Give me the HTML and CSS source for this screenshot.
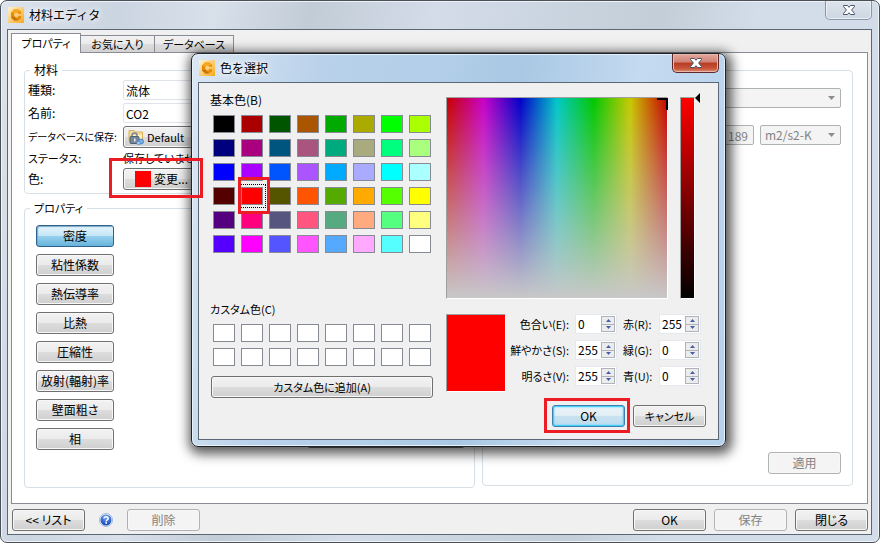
FILE: index.html
```html
<!DOCTYPE html>
<html lang="ja">
<head>
  <meta charset="UTF-8" />
  <meta name="viewport" content="width=device-width, initial-scale=1.0" />
  <title>材料エディタ</title>
  <link rel="stylesheet" href="styles.css">
</head>
<body>
<svg class="defs" width="0" height="0" aria-hidden="true">
  <defs>
    <linearGradient id="iconBg" x1="0" y1="0" x2="1" y2="1">
      <stop offset="0" stop-color="#fff3d6" />
      <stop offset="1" stop-color="#f6a81c" />
    </linearGradient>
    <radialGradient id="helpBg" cx="0.5" cy="0.25" r="0.8">
      <stop offset="0" stop-color="#6fa4f4" />
      <stop offset="1" stop-color="#0a3fb4" />
    </radialGradient>
    <symbol id="logo" viewBox="0 0 16 16">
      <rect width="16" height="16" fill="url(#iconBg)" />
      <path d="M13 4.6 L10 2.4 H6 L3 5.4 V10.4 L6.2 13.6 H10 L13 11.6 V9 H10.6 L9.4 10.6 H7.4 L6.2 9.2 V6.6 L7.4 5.4 H9.4 L10.6 6.8 H13 Z" fill="#e58a06" />
      <path d="M13 4.6 L10 2.4 H6 L3 5.4 L6.2 6.6 L7.4 5.4 H9.4 Z" fill="#f7a91a" />
      <path d="M6.2 9.2 L3 10.4 L6.2 13.6 H10 L7.4 10.6 Z" fill="#c87505" />
    </symbol>
    <symbol id="closeX" viewBox="0 0 12 10">
      <path d="M0.5 0.5 H4.5 L6 2.3 L7.5 0.5 H11.5 V1.5 L8.6 5 L11.5 8.5 V9.5 H7.5 L6 7.7 L4.5 9.5 H0.5 V8.5 L3.4 5 L0.5 1.5 Z" fill="#fff" stroke="#4a5268" stroke-width="1" stroke-linejoin="round" />
    </symbol>
  </defs>
</svg>

<div class="window main-window">
  <header class="titlebar">
    <svg class="logo"><use href="#logo" /></svg>
    <h1>材料エディタ</h1>
    <button class="close" aria-label="閉じる"><svg><use href="#closeX" /></svg></button>
  </header>

  <div class="client">
    <div class="tabs" role="tablist">
      <button class="tab active" role="tab" aria-selected="true">プロパティ</button>
      <button class="tab" role="tab">お気に入り</button>
      <button class="tab" role="tab">データベース</button>
    </div>

    <main class="page">
      <div class="column">
        <fieldset class="group">
          <legend>材料</legend>
          <div class="form">
            <label for="kind">種類:</label>
            <input id="kind" class="field" type="text" value="流体">
            <label for="name">名前:</label>
            <input id="name" class="field" type="text" value="CO2">
            <label class="long" for="saveTo">データベースに保存:</label>
            <button id="saveTo" class="btn left">
              <svg class="db-icon" viewBox="0 0 16 16">
                <path d="M1 1.5 H6 L7.5 3 H14.5 V12 H1 Z" fill="#f4dc9a" stroke="#d8b25c" />
                <path d="M5 6 H14 V12 H5 Z" fill="#fff3c4" />
                <path d="M4 8 V6.5 A2.5 2.5 0 0 1 9 6.5 V8" fill="none" stroke="#7c8794" stroke-width="1.5" />
                <rect x="2" y="7.5" width="9" height="7" rx="1" fill="#77879a" stroke="#526274" />
                <rect x="6" y="9.5" width="1.5" height="3" fill="#e8eef4" />
                <circle cx="13" cy="12.5" r="2.5" fill="#7db0e6" stroke="#4c84c4" />
                <circle cx="10.5" cy="14" r="1.8" fill="#a9cdf2" stroke="#4c84c4" stroke-width="0.7" />
              </svg>
              <span class="small">Default</span>
            </button>
            <span class="small">ステータス:</span>
            <span class="small">保存していません</span>
            <label for="change">色:</label>
            <div class="marked marked-change">
              <button id="change" class="btn left"><span class="chip"></span>変更...</button>
            </div>
          </div>
        </fieldset>

        <fieldset class="group grow">
          <legend class="small">プロパティ</legend>
          <div class="props">
            <div class="prop-list">
              <button class="btn selected">密度</button>
              <button class="btn">粘性係数</button>
              <button class="btn">熱伝導率</button>
              <button class="btn">比熱</button>
              <button class="btn">圧縮性</button>
              <button class="btn">放射(輻射)率</button>
              <button class="btn">壁面粗さ</button>
              <button class="btn">相</button>
            </div>
            <button class="btn wide" aria-label="プロパティ"></button>
          </div>
        </fieldset>
      </div>

      <fieldset class="group detail">
        <legend></legend>
        <select class="combo" disabled aria-label="種類"><option></option></select>
        <div class="value-row">
          <input class="value" type="text" value="189" disabled aria-label="値">
          <select class="combo unit" disabled aria-label="単位"><option>m2/s2-K</option></select>
        </div>
        <button class="btn std apply" disabled>適用</button>
      </fieldset>
    </main>

    <footer class="footer">
      <button class="btn std">&lt;&lt; リスト</button>
      <button class="help" aria-label="ヘルプ">
        <svg viewBox="0 0 14 14">
          <circle cx="7" cy="7" r="6.5" fill="#fff" stroke="#9db4dc" />
          <circle cx="7" cy="7" r="5.5" fill="url(#helpBg)" />
          <path d="M5 5.6 C5 3.2 9.2 3.2 9.2 5.5 C9.2 7 7.2 6.9 7.2 8.4" fill="none" stroke="#fff" stroke-width="1.5" />
          <rect x="6.4" y="9.2" width="1.6" height="1.6" fill="#fff" />
        </svg>
      </button>
      <button class="btn std" disabled>削除</button>
      <span class="spacer"></span>
      <button class="btn std">OK</button>
      <button class="btn std" disabled>保存</button>
      <button class="btn std">閉じる</button>
    </footer>
  </div>
</div>

<div class="window dialog" role="dialog" aria-labelledby="dialogTitle">
  <header class="titlebar">
    <svg class="logo"><use href="#logo" /></svg>
    <h2 id="dialogTitle">色を選択</h2>
    <button class="close red" aria-label="閉じる"><svg><use href="#closeX" /></svg></button>
  </header>

  <div class="client dialog-body">
    <section class="palette">
      <h3>基本色(B)</h3>
      <div class="swatches" id="basic"></div>
      <h3 class="custom-title small">カスタム色(C)</h3>
      <div class="swatches custom" id="custom"></div>
      <button class="btn add small">カスタム色に追加(A)</button>
    </section>

    <section class="picker">
      <div class="picker-top">
        <div class="spectrum">
          <svg class="cross" viewBox="0 0 11 12"><path d="M0 0 H11 V12 H9 V2 H0 Z" /></svg>
        </div>
        <div class="brightness">
          <svg class="arrow" viewBox="0 0 5 10"><path d="M5 0 V10 L0 5 Z" /></svg>
        </div>
      </div>

      <div class="picker-bottom">
        <div class="preview"></div>
        <div class="values small">
          <label for="hue">色合い(E):</label>
          <div class="spin"><input id="hue" type="text" value="0"><span class="steps"><button aria-label="+"></button><button aria-label="-"></button></span></div>
          <label class="rgb" for="red">赤(R):</label>
          <div class="spin"><input id="red" type="text" value="255"><span class="steps"><button aria-label="+"></button><button aria-label="-"></button></span></div>
          <label for="sat">鮮やかさ(S):</label>
          <div class="spin"><input id="sat" type="text" value="255"><span class="steps"><button aria-label="+"></button><button aria-label="-"></button></span></div>
          <label class="rgb" for="green">緑(G):</label>
          <div class="spin"><input id="green" type="text" value="0"><span class="steps"><button aria-label="+"></button><button aria-label="-"></button></span></div>
          <label for="val">明るさ(V):</label>
          <div class="spin"><input id="val" type="text" value="255"><span class="steps"><button aria-label="+"></button><button aria-label="-"></button></span></div>
          <label class="rgb" for="blue">青(U):</label>
          <div class="spin"><input id="blue" type="text" value="0"><span class="steps"><button aria-label="+"></button><button aria-label="-"></button></span></div>
        </div>
      </div>

      <div class="dialog-buttons">
        <div class="marked marked-ok"><button class="btn std default">OK</button></div>
        <button class="btn std small">キャンセル</button>
      </div>
    </section>
  </div>
</div>

<script>
  const basic = document.getElementById('basic');
  const custom = document.getElementById('custom');

  function addSwatch(parent, color) {
    const b = document.createElement('button');
    b.className = 'swatch';
    b.style.backgroundColor = color;
    b.setAttribute('aria-label', color);
    parent.appendChild(b);
    return b;
  }

  // 緑 → 赤 → 青 の順、縦方向に並べる
  for (const g of [0, 85, 170, 255]) {
    for (const r of [0, 85, 170, 255]) {
      for (const b of [0, 127, 255]) {
        const el = addSwatch(basic, `rgb(${r}, ${g}, ${b})`);
        if (r === 255 && g === 0 && b === 0) el.classList.add('current');
      }
    }
  }
  for (let i = 0; i < 16; i++) addSwatch(custom, '#ffffff');
</script>
</body>
</html>
```
FILE: styles.css
```css
*, *::before, *::after {
  box-sizing: border-box;
}
body {
  margin: 0;
  background: #fff;
  color: #000;
  font-family: "Noto Sans CJK JP", sans-serif;
  font-size: 12px;
  line-height: 14px;
  font-feature-settings: "palt";
}
button, input, select {
  font: inherit;
  font-feature-settings: inherit;
  color: inherit;
  margin: 0;
}
h1, h2, h3 {
  margin: 0;
  font-size: 12px;
  font-weight: 400;
}
.small {
  font-size: 11px;
}
.long {
  font-size: 10px;
}
.defs {
  position: absolute;
}

/* windows */
.window {
  display: flex;
  flex-direction: column;
  border: 1px solid #4b5056;
  border-radius: 7px;
  padding: 0 6px 6px;
}
.main-window {
  min-height: 100vh;
  padding: 0 7px 7px 6px;
  background: linear-gradient(100deg, #dce3ec 0, #cbd5e1 12%, #d8e0ea 22%, #c2ccd7 32%, #d3dce8 45%, #c3ced9 68%, #d3dde9 78%, #d3dde9 100%);
  box-shadow: inset 0 0 0 1px #eef3f8;
}
.titlebar {
  display: flex;
  align-items: center;
  height: 28px;
}
.titlebar h1, .titlebar h2 {
  font-feature-settings: normal;
  line-height: 16px;
  flex: 1;
  text-shadow: 0 0 6px #fff, 0 0 6px #fff;
}
.logo {
  width: 16px;
  height: 16px;
  margin: 0 5px 0 1px;
}
.close {
  align-self: flex-start;
  display: flex;
  align-items: center;
  justify-content: center;
  width: 47px;
  height: 19px;
  padding: 0;
  border: 1px solid #8a97a8;
  border-top: 0;
  border-radius: 0 0 5px 5px;
  background: linear-gradient(#dde4ec, #cdd7e2);
  box-shadow: inset 0 0 0 1px #e9eff5;
}
.close.red {
  border-color: #5c2a2c;
  background: linear-gradient(#e2a99c 0, #d18275 45%, #b83a22 50%, #c8553c 80%, #dd8b70 100%);
  box-shadow: inset 0 0 0 1px #e8b8a8;
}
.close svg {
  width: 12px;
  height: 10px;
}
.client {
  flex: 1;
  display: flex;
  flex-direction: column;
  border: 1px solid #5b6775;
  background: #f0f0f0;
  padding: 3px;
}

/* tabs */
.tabs {
  display: flex;
  align-items: flex-end;
  height: 19px;
}
.tab {
  height: 17px;
  min-width: 74px;
  padding: 0 8px;
  border: 1px solid #898c95;
  border-left-width: 0;
  border-bottom: 0;
  background: linear-gradient(#f2f2f2 0, #ebebeb 50%, #dddddd 50%, #d2d2d2 100%);
  font-size: 11px;
  line-height: 14px;
}
.tab.active {
  height: 20px;
  min-width: 70px;
  margin-bottom: -1px;
  padding-bottom: 2px;
  border-left-width: 1px;
  background: #fff;
  position: relative;
}
.page {
  flex: 1;
  display: grid;
  grid-template-columns: 450fr 371fr;
  gap: 7px;
  padding: 10px 14px 15px 12px;
  border: 1px solid #898c95;
  background: #fff;
}
.column {
  display: flex;
  flex-direction: column;
  gap: 7px;
}
.group {
  margin: 0;
  min-width: 0;
  padding: 3px 9px 3px 3px;
  border: 1px solid #d5dfe5;
  border-radius: 4px;
}
.group legend {
  height: 14px;
  margin-left: 2px;
  padding: 0 4px;
}
.grow {
  flex: 1;
}
.form {
  display: grid;
  grid-template-columns: 92px 1fr;
  grid-template-rows: 20px 20px 22px 14px 22px;
  gap: 3px;
  align-items: center;
  white-space: nowrap;
}
.field {
  width: 100%;
  height: 20px;
  padding: 0 2px;
  border: 1px solid #dfe3ea;
  border-radius: 2px;
  background: #fff;
}
.props {
  display: flex;
  justify-content: space-between;
  align-items: flex-end;
  padding: 7px 0 0 8px;
}
.prop-list {
  display: flex;
  flex-direction: column;
  gap: 7px;
  width: 78px;
}

/* buttons */
.btn {
  height: 22px;
  padding: 0 2px;
  border: 1px solid #707070;
  border-radius: 3px;
  background: linear-gradient(#f2f2f2 0, #ebebeb 50%, #dddddd 50%, #cfcfcf 100%);
  box-shadow: inset 0 0 0 1px #f8f8f8;
  line-height: 16px;
  text-align: center;
  white-space: nowrap;
}
.btn.std {
  width: 73px;
}
.btn.left {
  display: flex;
  align-items: center;
  gap: 3px;
  width: 100%;
  padding-left: 4px;
}
.btn.wide {
  width: 158px;
  margin-bottom: 2px;
}
.btn:disabled {
  border-color: #adb2b5;
  background: #f4f4f4;
  color: #838383;
}
.btn.selected {
  border-color: #2c628b;
  background: linear-gradient(#e5f4fc 0, #c4e5f6 50%, #98d1ef 50%, #68b3db 100%);
  box-shadow: inset 1px 1px 1px #7fa9c4;
}
.btn.default {
  border-color: #3c7fb1;
  background: linear-gradient(#eef4f8 0, #e0edf5 50%, #c9e2f0 50%, #bddcee 100%);
  box-shadow: inset 0 0 0 1px #46d0fb, inset 0 0 2px 1px #46d0fb;
}
.db-icon {
  width: 16px;
  height: 16px;
}
.chip {
  width: 16px;
  height: 16px;
  margin-left: 7px;
  background: #f00;
}

/* red frames over a control */
.marked {
  position: relative;
}
.marked::after {
  content: "";
  position: absolute;
  border: 3px solid #ed1c24;
  pointer-events: none;
  z-index: 20;
}
.marked-change::after {
  left: -14px;
  top: -10px;
  width: 94px;
  height: 40px;
}
.marked-ok::after {
  inset: -7px -5px -6px -8px;
}

/* right group */
.detail {
  display: flex;
  flex-direction: column;
  margin-bottom: 2px;
  padding: 11px 11px 11px 21px;
}
.detail legend {
  padding: 0;
}
.combo {
  appearance: none;
  width: 100%;
  height: 20px;
  padding: 0 4px;
  border: 1px solid #adb2b5;
  border-radius: 2px;
  background: #f4f4f4 url("data:image/svg+xml,%3Csvg xmlns='http://www.w3.org/2000/svg' width='7' height='4'%3E%3Cpath d='M0 0H7L3.5 4Z' fill='%238c8c8c'/%3E%3C/svg%3E") no-repeat right 5px center;
}
.combo:disabled, .value:disabled {
  color: #838383;
  opacity: 1;
}
.value-row {
  display: flex;
  justify-content: flex-end;
  gap: 6px;
  margin-top: 17px;
}
.value {
  width: 120px;
  height: 20px;
  padding: 0 5px;
  border: 1px solid #adb2b5;
  border-radius: 2px;
  background: #f4f4f4;
  text-align: right;
}
.combo.unit {
  width: 81px;
}
.apply {
  align-self: flex-end;
  margin-top: auto;
}

/* footer */
.footer {
  display: flex;
  align-items: center;
  gap: 8px;
  padding: 5px 0 0 1px;
}
.spacer {
  flex: 1;
}
.help {
  width: 26px;
  height: 14px;
  padding: 0 6px;
  border: 0;
  background: none;
}
.help svg {
  display: block;
  width: 14px;
  height: 14px;
}

/* color dialog */
.dialog {
  position: absolute;
  left: 191px;
  top: 53px;
  z-index: 10;
  border-color: #1c2227;
  background: linear-gradient(100deg, #dbe7f3 0, #b9d1ea 22%, #b4cfe9 40%, #a9c8e4 55%, #c4daf0 75%, #b5d1ec 100%);
  box-shadow: inset 0 0 0 1px #e6f1fa, 2px 3px 12px 4px rgba(0, 0, 0, 0.65);
}
.dialog-body {
  flex-direction: row;
  gap: 13px;
  padding: 9px 12px 12px;
}
.palette {
  width: 222px;
}
.palette h3 {
  height: 15px;
  margin: 1px 0 0 -1px;
}
.palette .custom-title {
  margin-top: 49px;
}
.swatches {
  display: grid;
  grid-template-rows: repeat(6, 18px);
  grid-auto-flow: column;
  grid-auto-columns: 22px;
  gap: 6px;
  padding: 7px 2px 0;
}
.swatches.custom {
  grid-template-rows: repeat(2, 18px);
}
.swatch {
  width: 22px;
  height: 18px;
  padding: 0;
  border: 1px solid #868a93;
}
.swatch.current {
  position: relative;
}
.swatch.current::before {
  content: "";
  position: absolute;
  inset: -4px -4px -4px -3px;
  border: 1px dotted #000;
}
.swatch.current::after {
  content: "";
  position: absolute;
  inset: -11px -8px -10px -4px;
  border: 3px solid #ed1c24;
}
.add {
  width: 100%;
  margin-top: 10px;
}
.picker {
  width: 260px;
  padding-top: 5px;
}
.picker-top {
  display: flex;
  gap: 12px;
}
.spectrum, .brightness, .preview {
  border: 1px solid;
  border-color: #a0a0a0 #fff #fff #a0a0a0;
}
.spectrum {
  position: relative;
  width: 222px;
  height: 202px;
  background:
    linear-gradient(rgba(200, 200, 200, 0), rgb(200, 200, 200)),
    linear-gradient(to right, #c80000, #c800c8, #0000c8, #00c8c8, #00c800, #c8c800, #c80000);
}
.cross {
  position: absolute;
  right: -1px;
  top: 0;
  width: 11px;
  height: 12px;
}
.brightness {
  position: relative;
  width: 15px;
  height: 202px;
  background: linear-gradient(#f00, #000);
}
.arrow {
  position: absolute;
  left: 14px;
  top: -5px;
  width: 5px;
  height: 10px;
}
.picker-bottom {
  display: flex;
  justify-content: space-between;
  margin-top: 15px;
}
.preview {
  width: 60px;
  height: 78px;
  background: #f00;
}
.values {
  display: grid;
  grid-template-columns: 62px 42px 30px 42px;
  grid-auto-rows: 20px;
  column-gap: 6px;
  row-gap: 6px;
  align-items: center;
  justify-content: end;
  margin-right: 5px;
  white-space: nowrap;
}
.values label {
  justify-self: end;
}
.values .rgb {
  justify-self: start;
}
.spin {
  display: flex;
  height: 20px;
  padding: 1px;
  border: 1px solid #e3e9ef;
  background: #fff;
  font-size: 12px;
}
.spin input {
  flex: 1;
  min-width: 0;
  padding: 0 0 0 1px;
  border: 0;
  background: none;
}
.steps {
  display: flex;
  flex-direction: column;
  width: 14px;
  border: 1px solid #b0b4ba;
}
.steps button {
  flex: 1;
  padding: 0;
  border: 0;
  background: #ececec url("data:image/svg+xml,%3Csvg xmlns='http://www.w3.org/2000/svg' width='5' height='3'%3E%3Cpath d='M0 3H5L2.5 0Z' fill='%23445fa8'/%3E%3C/svg%3E") no-repeat center;
}
.steps button + button {
  border-top: 1px solid #b0b4ba;
  background-image: url("data:image/svg+xml,%3Csvg xmlns='http://www.w3.org/2000/svg' width='5' height='3'%3E%3Cpath d='M0 0H5L2.5 3Z' fill='%23445fa8'/%3E%3C/svg%3E");
}
.dialog-buttons {
  display: flex;
  justify-content: flex-end;
  gap: 8px;
  margin-top: 13px;
}
```
